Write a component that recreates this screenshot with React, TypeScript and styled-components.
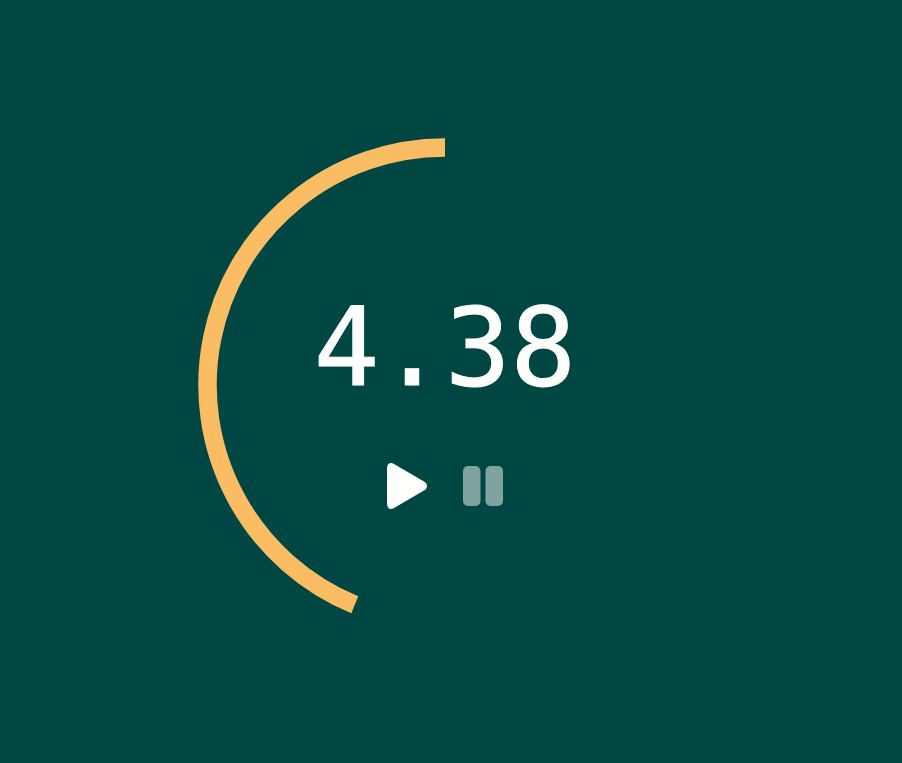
import React, { useEffect, useRef, useState } from "react";
import styled, { createGlobalStyle } from "styled-components";

const DURATION = 10;
const RADIUS = 237.5;
const CENTER = 247;

const GlobalStyle = createGlobalStyle`
  *, *::before, *::after { box-sizing: border-box; }
  body {
    margin: 0;
    background: #004743;
  }
`;

const Page = styled.main`
  display: grid;
  place-items: center;
  min-height: 100vh;
  padding: 7px 12px 0 0;
  background: #004743;
`;

const Dial = styled.section`
  display: grid;
  place-items: center;
  width: min(494px, 100vw);
  aspect-ratio: 1;
`;

const Ring = styled.svg`
  grid-area: 1 / 1;
  width: 100%;
  height: 100%;
`;

const Panel = styled.div`
  grid-area: 1 / 1;
  z-index: 1;
  display: flex;
  flex-direction: column;
  align-items: center;
  gap: 50px;
  padding-top: 24px;
`;

const Time = styled.output`
  color: #fffffc;
  font-family: "DejaVu Sans Mono", monospace;
  font-size: 109px;
  line-height: 128px;
  -webkit-text-stroke: 1px currentColor;
`;

const Controls = styled.div`
  display: flex;
  gap: 28px;
`;

const IconButton = styled.button`
  display: grid;
  place-items: center;
  width: 48px;
  height: 48px;
  padding: 0;
  border: 0;
  background: none;
  color: #fffffc;
  cursor: pointer;

  &:disabled {
    opacity: 0.5;
    cursor: default;
  }
`;

function arcPath(fraction: number) {
  const angle = Math.min(fraction, 0.9999) * Math.PI * 2;
  const x = CENTER - RADIUS * Math.sin(angle);
  const y = CENTER - RADIUS * Math.cos(angle);
  const large = fraction > 0.5 ? 1 : 0;
  return `M${CENTER} ${CENTER - RADIUS}A${RADIUS} ${RADIUS} 0 ${large} 0 ${x} ${y}`;
}

export default function App() {
  const [left, setLeft] = useState(4.38);
  const [running, setRunning] = useState(false);
  const start = useRef({ time: 0, left: 0 });

  useEffect(() => {
    if (!running) return;
    start.current = { time: performance.now(), left };
    const id = window.setInterval(() => {
      const passed = (performance.now() - start.current.time) / 1000;
      const next = Math.max(0, start.current.left - passed);
      setLeft(next);
      if (next === 0) setRunning(false);
    }, 16);
    return () => window.clearInterval(id);
  }, [running]);

  const play = () => {
    if (left === 0) setLeft(DURATION);
    setRunning(true);
  };

  return (
    <>
      <GlobalStyle />
      <Page>
        <Dial aria-label="Timer">
          <Ring viewBox="0 0 494 494" aria-hidden="true">
            <path d={arcPath(left / DURATION)} fill="none" stroke="#fabd64" strokeWidth="18.5" />
          </Ring>
          <Panel>
            <Time>{left.toFixed(2)}</Time>
            <Controls>
              <IconButton type="button" aria-label="Play" disabled={running} onClick={play}>
                <svg width="48" height="48" viewBox="0 0 48 48" aria-hidden="true">
                  <path
                    d="M4 6C4 1.8 7.2 -0.2 10.6 1.8L41 19.4C45 21.7 45 26.3 41 28.6L10.6 46.2C7.2 48.2 4 46.2 4 42Z"
                    fill="currentColor"
                  />
                </svg>
              </IconButton>
              <IconButton
                type="button"
                aria-label="Pause"
                disabled={!running}
                onClick={() => setRunning(false)}
              >
                <svg width="48" height="48" viewBox="0 0 48 48" aria-hidden="true">
                  <rect x="4" y="4" width="17.5" height="40" rx="5" fill="currentColor" />
                  <rect x="26.5" y="4" width="17.5" height="40" rx="5" fill="currentColor" />
                </svg>
              </IconButton>
            </Controls>
          </Panel>
        </Dial>
      </Page>
    </>
  );
}
